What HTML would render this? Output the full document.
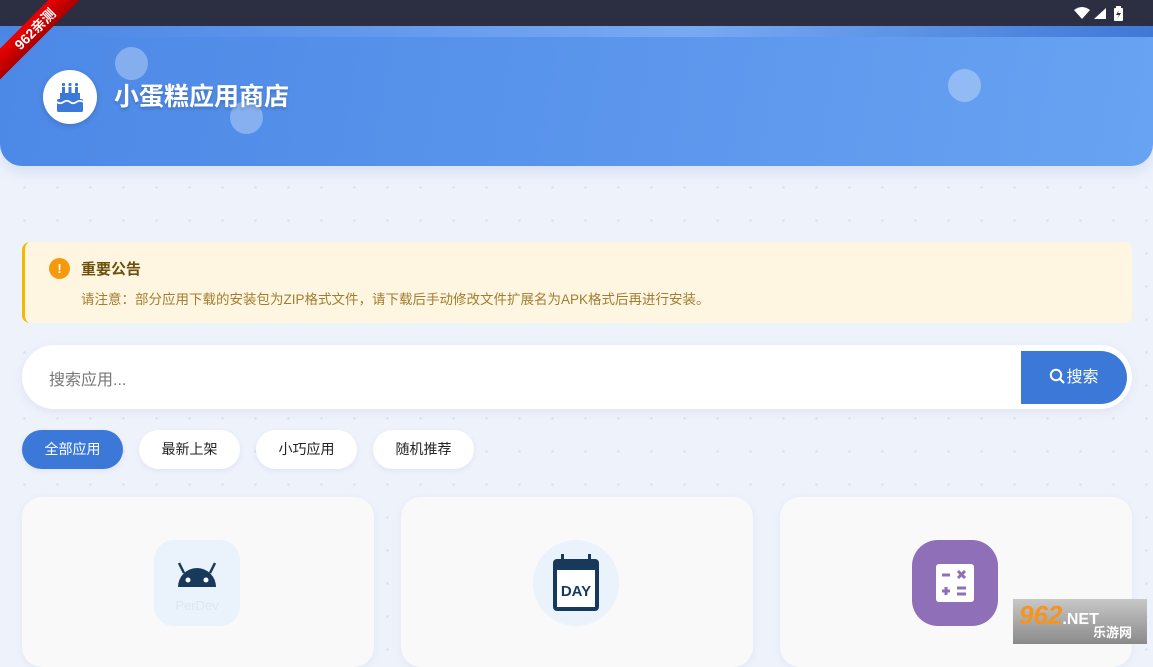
<!DOCTYPE html>
<html><head><meta charset="utf-8"><style>
*{margin:0;padding:0;box-sizing:border-box}
body{width:1153px;height:649px;overflow:hidden;position:relative;font-family:"Liberation Sans","Noto Sans CJK SC",sans-serif;background-color:#eef2fb;background-image:radial-gradient(circle,#dbe1f0 1.1px,transparent 1.5px);background-size:33px 33px;background-position:8px 6px}
.status{position:absolute;left:0;top:0;width:1153px;height:26px;background:#2c2e42}
.header{position:absolute;left:0;top:26px;width:1153px;height:140px;background:linear-gradient(100deg,#4c88e6,#68a2f2);border-radius:0 0 22px 22px;box-shadow:0 6px 14px rgba(80,120,200,.15);overflow:hidden}
.stripe{position:absolute;left:0;top:0;width:100%;height:11px;background:linear-gradient(90deg,#4a86e4,#78aaf2 60%,#3f78d6)}
.bub{position:absolute;border-radius:50%;background:rgba(255,255,255,.3)}
.logo{position:absolute;left:43px;top:70px;width:54px;height:54px;border-radius:50%;background:#fff;box-shadow:0 2px 6px rgba(0,0,0,.15)}
.title{position:absolute;left:114px;top:77px;font-size:25px;font-weight:bold;color:#fff;text-shadow:0 2px 3px rgba(0,0,0,.2)}
.notice{position:absolute;left:22px;top:242px;width:1110px;height:81px;background:#fff6e2;border-left:3px solid #f5b800;border-radius:8px}
.notice .ic{position:absolute;left:24px;top:16px;width:21px;height:21px;border-radius:50%;background:#f59a0c;color:#fff;font-size:13px;font-weight:bold;text-align:center;line-height:21px}
.notice .t{position:absolute;left:56px;top:16px;font-size:15px;font-weight:bold;color:#6b4f0b}
.notice .d{position:absolute;left:56px;top:46px;font-size:13.5px;color:#a27d30}
.search{position:absolute;left:22px;top:345px;width:1110px;height:64px;background:#fff;border-radius:32px;box-shadow:0 3px 10px rgba(100,120,180,.1)}
.search .ph{position:absolute;left:27px;top:21px;font-size:16px;color:#777}
.search .btn{position:absolute;left:999px;top:6px;width:106px;height:53px;background:#3b78d8;border-radius:0 27px 27px 0;color:#fff;font-size:16px;text-align:center;line-height:53px}
.chip{position:absolute;top:430px;height:39px;width:101px;border-radius:20px;background:#fff;font-size:14px;color:#222;text-align:center;line-height:39px;box-shadow:0 2px 6px rgba(100,120,180,.1)}
.card{position:absolute;top:497px;width:352px;height:170px;background:#f9f9f9;border-radius:20px;box-shadow:0 2px 8px rgba(100,120,180,.08)}
.ai{position:absolute;left:132px;top:43px;width:86px;height:86px}
</style></head><body>
<div class="status">
<svg style="position:absolute;left:1073px;top:6px" width="56" height="15" viewBox="0 0 56 15"><path d="M1 4 Q9 -2 17 4 L9 13 Z" fill="#fff"/><path d="M21 13 L33 13 L33 2 Z" fill="#fff"/><rect x="41" y="2" width="9" height="13" rx="1" fill="#fff"/><rect x="43" y="0" width="5" height="2" fill="#fff"/><path d="M46 4 L43 9 L46 9 L44 13 L48 7 L45 7 Z" fill="#2c2e42"/></svg>
</div>
<div class="header"><div class="stripe"></div>
<div class="bub" style="left:115px;top:21px;width:33px;height:33px"></div>
<div class="bub" style="left:230px;top:75px;width:33px;height:33px"></div>
<div class="bub" style="left:948px;top:43px;width:33px;height:33px"></div>
</div>
<div class="logo"><svg width="54" height="54" viewBox="0 0 54 54"><g fill="#3b78d8"><rect x="14" y="29" width="26" height="13" rx="1.5"/><rect x="17" y="23" width="20" height="7"/><rect x="19" y="17" width="3" height="6"/><rect x="25.5" y="17" width="3" height="6"/><rect x="32" y="17" width="3" height="6"/><circle cx="20.5" cy="14.5" r="1.6"/><circle cx="27" cy="14.5" r="1.6"/><circle cx="33.5" cy="14.5" r="1.6"/></g><path d="M14 32 q3 2.5 6.5 0 t6.5 0 t6.5 0 t6.5 0" stroke="#fff" stroke-width="1.8" fill="none"/></svg></div>
<div class="title">小蛋糕应用商店</div>
<div style="position:absolute;left:-30px;top:18px;width:130px;height:22px;background:linear-gradient(#e00,#a00);transform:rotate(-45deg);color:#fff;font-size:14px;font-weight:bold;text-align:center;line-height:22px">962亲测</div>
<div class="notice"><div class="ic">!</div><div class="t">重要公告</div><div class="d">请注意：部分应用下载的安装包为ZIP格式文件，请下载后手动修改文件扩展名为APK格式后再进行安装。</div></div>
<div class="search"><div class="ph">搜索应用...</div><div class="btn"><svg width="17" height="17" viewBox="0 0 17 17" style="vertical-align:-3px"><circle cx="7" cy="7" r="5.2" stroke="#fff" stroke-width="2" fill="none"/><path d="M11 11 L15 15" stroke="#fff" stroke-width="2.2"/></svg>搜索</div></div>
<div class="chip" style="left:22px;background:#3b78d8;color:#fff">全部应用</div>
<div class="chip" style="left:139px">最新上架</div>
<div class="chip" style="left:256px">小巧应用</div>
<div class="chip" style="left:373px">随机推荐</div>
<div class="card" style="left:22px"><div class="ai" style="background:#eaf2fb;border-radius:20px"><svg width="86" height="86" viewBox="0 0 86 86"><path d="M24 47 A19 19 0 0 1 62 47 Z" fill="#173a5c"/><path d="M30 33 L25 23 M56 33 L61 23" stroke="#173a5c" stroke-width="2.5"/><circle cx="34" cy="40" r="2.5" fill="#fff"/><circle cx="52" cy="40" r="2.5" fill="#fff"/><text x="43" y="70" font-size="13" fill="#dde6ee" text-anchor="middle" font-family="Liberation Sans">PerDev</text></svg></div></div>
<div class="card" style="left:401px"><div class="ai" style="background:#eaf2fb;border-radius:50%"><svg width="86" height="86" viewBox="0 0 86 86"><rect x="20" y="19" width="46" height="52" rx="4" fill="#173a5c"/><rect x="24" y="30" width="38" height="37" fill="#fff"/><rect x="28" y="14" width="3" height="9" fill="#173a5c"/><rect x="55" y="14" width="3" height="9" fill="#173a5c"/><text x="43" y="56" font-size="15" font-weight="bold" fill="#173a5c" text-anchor="middle" font-family="Liberation Sans">DAY</text></svg></div></div>
<div class="card" style="left:780px"><div class="ai" style="background:#8e6fb8;border-radius:26px"><svg width="86" height="86" viewBox="0 0 86 86"><rect x="24" y="24" width="38" height="38" rx="3" fill="#fff"/><g stroke="#8e6fb8" stroke-width="3"><path d="M30 35 H38 M46 31 L53 38 M53 31 L46 38 M30 51 H38 M34 47 V55 M45 48 H54 M45 54 H54"/></g></svg></div></div>
<div style="position:absolute;left:1013px;top:599px;width:134px;height:45px;background:linear-gradient(#c8c8c8,#8a8a8a);font-weight:bold;font-size:26px;color:#f7931e;padding-left:6px;line-height:32px;font-style:italic">962<span style="font-size:16px;color:#fff;font-style:normal">.NET</span><div style="position:absolute;left:80px;top:26px;font-size:13px;color:#fff;line-height:16px;font-style:normal">乐游网</div></div>
</body></html>
